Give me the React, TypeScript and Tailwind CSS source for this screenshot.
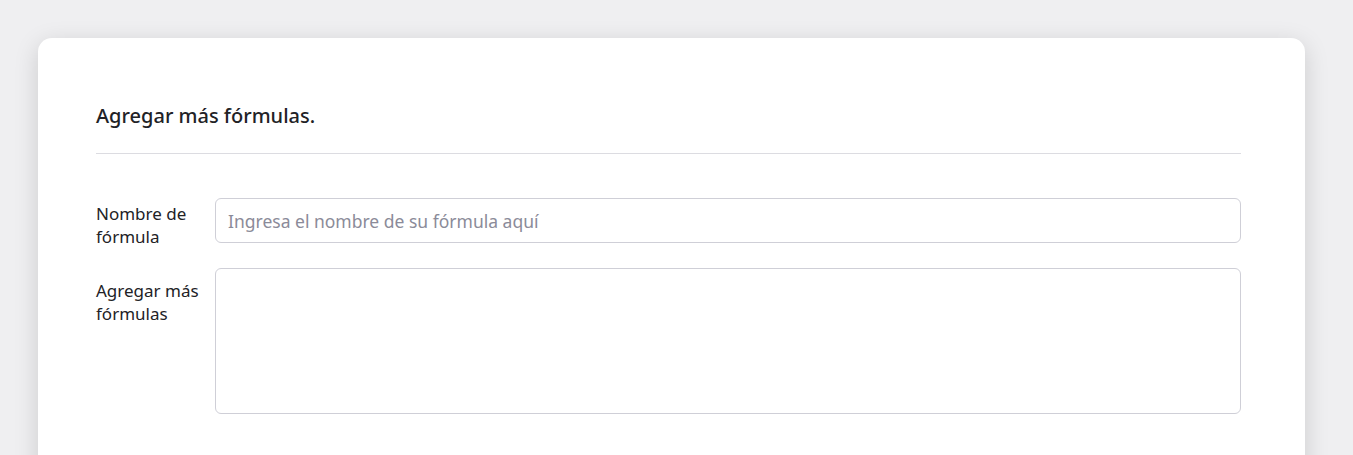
export default function App() {
  return (
    <div
      className="h-[455px] bg-[#efeff1] pl-[38px] pr-[48px] pt-[38px] overflow-hidden"
      style={{ fontFamily: '"Noto Sans", "Open Sans", sans-serif' }}
    >
      <div className="bg-white rounded-t-[14px] shadow-[0_6px_24px_rgba(0,0,0,0.15)] pl-[58px] pr-[64px] pt-[65px] pb-[80px]">
        <h2 className="text-[20px] leading-[26px] font-medium text-[#222226]">
          Agregar más fórmulas.
        </h2>
        <div className="mt-[24px] h-px bg-[#dcdce1]" />
        <div className="mt-[44px] flex flex-col gap-[25px]">
          <div className="flex items-start h-[45px]">
            <label className="w-[119px] shrink-0 pt-[4px] text-[17px] leading-[23px] text-[#222226]">
              Nombre de
              <br />
              fórmula
            </label>
            <input
              className="flex-1 h-[45px] rounded-[6px] border border-[#cfcfd7] px-[12px] text-[17.5px] text-[#222226] placeholder:text-[#8b8b99] outline-none"
              placeholder="Ingresa el nombre de su fórmula aquí"
            />
          </div>
          <div className="flex items-start">
            <label className="w-[119px] shrink-0 pt-[11px] text-[17px] leading-[23px] text-[#222226]">
              Agregar más
              <br />
              fórmulas
            </label>
            <textarea className="flex-1 h-[146px] rounded-[6px] border border-[#cfcfd7] px-[12px] py-[10px] text-[17px] resize-none outline-none" />
          </div>
        </div>
      </div>
    </div>
  );
}
